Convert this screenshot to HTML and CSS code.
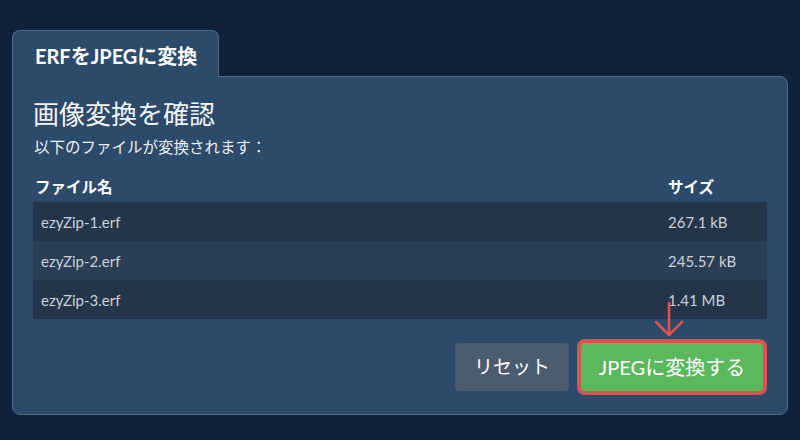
FILE: index.html
```html
<!DOCTYPE html>
<html lang="ja">
<head>
<meta charset="utf-8">
<link rel="stylesheet" href="styles.css">
</head>
<body>
<div class="wrap">
  <div class="tab">ERFをJPEGに変換</div>
  <div class="panel">
    <h1 class="title">画像変換を確認</h1>
    <p class="sub">以下のファイルが変換されます：</p>
    <table class="files">
      <thead>
        <tr><th class="c-name">ファイル名</th><th class="c-size">サイズ</th></tr>
      </thead>
      <tbody>
        <tr><td>ezyZip-1.erf</td><td>267.1 kB</td></tr>
        <tr><td>ezyZip-2.erf</td><td>245.57 kB</td></tr>
        <tr><td>ezyZip-3.erf</td><td>1.41 MB</td></tr>
      </tbody>
    </table>
    <div class="actions">
      <button class="btn btn-reset">リセット</button>
      <button class="btn btn-go">JPEGに変換する</button>
      <svg class="arrow" width="32" height="36" viewBox="0 0 32 36">
        <path d="M16 0 V33 M3 20 L16 33 L29 20" fill="none" stroke="#d9534f" stroke-width="2.6" stroke-linecap="round" stroke-linejoin="round"/>
      </svg>
    </div>
  </div>
</div>
</body>
</html>
```

FILE: styles.css
```css
html, body {
  margin: 0;
  padding: 0;
}
body {
  background: #10223a;
  font-family: Lato, "Noto Sans CJK JP", sans-serif;
  color: #ffffff;
  width: 800px;
  height: 440px;
  overflow: hidden;
}
.wrap {
  padding: 30px 12px 0 12px;
}
.tab {
  display: inline-block;
  position: relative;
  z-index: 2;
  margin-bottom: -1px;
  background: #2c4a6a;
  border: 1px solid #4f6b8a;
  border-bottom: none;
  border-radius: 8px 8px 0 0;
  padding: 13px 21px 9px 22px;
  line-height: 24px;
  font-size: 20px;
  font-weight: 700;
  color: #ffffff;
}
.panel {
  position: relative;
  background: #2c4a6a;
  border: 1px solid #4f6b8a;
  border-radius: 0 8px 8px 8px;
  padding: 20px 20px 23px 20px;
}
.title {
  margin: 0;
  font-size: 26px;
  font-weight: 400;
  line-height: 34px;
  color: #f2f4f7;
}
.sub {
  margin: 6px 0 0 1px;
  font-size: 15.5px;
  line-height: 20px;
  color: #eef1f5;
}
.files {
  width: 100%;
  border-collapse: collapse;
  margin-top: 19px;
}
.files th {
  text-align: left;
  font-size: 15.5px;
  font-weight: 700;
  line-height: 22px;
  padding: 0 0 4px 2px;
  color: #ffffff;
}
.files th.c-size {
  width: 99px;
  padding-left: 8px;
}
.files td {
  height: 39px;
  padding: 0 0 0 8px;
  font-size: 15px;
  color: #c9d1db;
}
.files tbody tr:nth-child(odd) {
  background: #243549;
}
.files tbody tr:nth-child(even) {
  background: #2a3f56;
}
.actions {
  position: relative;
  display: flex;
  justify-content: flex-end;
  align-items: center;
  gap: 12px;
  margin-top: 24px;
  padding-right: 4px;
}
.btn {
  font-family: Lato, "Noto Sans CJK JP", sans-serif;
  color: #ffffff;
  border: none;
  border-radius: 4px;
  height: 48px;
  line-height: 48px;
  padding: 0;
}
.btn-reset {
  width: 114px;
  font-size: 19px;
  background: #4b5c6e;
}
.btn-go {
  width: 182px;
  font-size: 20px;
  background: #5cb85c;
  box-shadow: 0 0 0 4px #d9534f;
}
.arrow {
  position: absolute;
  right: 82px;
  top: -41px;
}
```
